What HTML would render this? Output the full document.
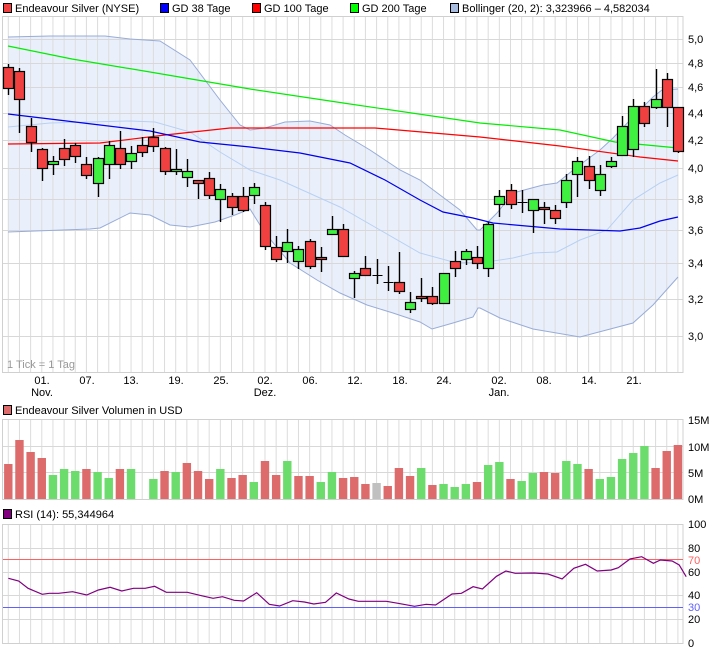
<!DOCTYPE html>
<html><head><meta charset="utf-8"><style>
html,body{margin:0;padding:0;background:#fff;width:726px;height:652px;overflow:hidden}
svg{display:block;font-family:"Liberation Sans",sans-serif;font-size:11px}
</style></head><body>
<svg id="s" width="726" height="652" xmlns="http://www.w3.org/2000/svg">
<g id="bg"></g>
<g id="fg"></g>
<!-- legend -->
<rect x="3.5" y="3.5" width="8" height="9" fill="#f04040" stroke="#000"/>
<text x="15" y="12">Endeavour Silver (NYSE)</text>
<rect x="160.5" y="3.5" width="8" height="9" fill="#0000ff" stroke="#000"/>
<text x="172" y="12">GD 38 Tage</text>
<rect x="252.5" y="3.5" width="8" height="9" fill="#ff0000" stroke="#000"/>
<text x="264" y="12">GD 100 Tage</text>
<rect x="350.5" y="3.5" width="8" height="9" fill="#00ff00" stroke="#000"/>
<text x="362" y="12">GD 200 Tage</text>
<rect x="450.5" y="3.5" width="8" height="9" fill="#a8bce0" stroke="#000"/>
<text x="462" y="12">Bollinger (20, 2): 3,323966 – 4,582034</text>
<g fill="#000">
<text x="688" y="43">5,0</text><text x="688" y="67">4,8</text><text x="688" y="91">4,6</text>
<text x="688" y="117">4,4</text><text x="688" y="144">4,2</text><text x="688" y="172">4,0</text>
<text x="688" y="203">3,8</text><text x="688" y="234">3,6</text><text x="688" y="267">3,4</text>
<text x="688" y="303">3,2</text><text x="688" y="340">3,0</text>
</g>
<text x="7" y="368" fill="#999">1 Tick = 1 Tag</text>
<g text-anchor="middle">
<text x="42" y="384">01.</text><text x="42" y="396">Nov.</text>
<text x="87" y="384">07.</text><text x="131" y="384">13.</text><text x="176" y="384">19.</text>
<text x="221" y="384">25.</text><text x="265" y="384">02.</text><text x="265" y="396">Dez.</text>
<text x="310" y="384">06.</text><text x="355" y="384">12.</text><text x="400" y="384">18.</text>
<text x="444" y="384">24.</text><text x="499" y="384">02.</text><text x="499" y="396">Jan.</text>
<text x="544" y="384">08.</text><text x="589" y="384">14.</text><text x="634" y="384">21.</text>
</g>
<rect x="3.5" y="405.5" width="8" height="9" fill="#dd6b6b" stroke="#000"/>
<text x="15" y="414">Endeavour Silver Volumen in USD</text>
<text x="688" y="424">15M</text><text x="688" y="451">10M</text><text x="688" y="477">5M</text><text x="688" y="503">0M</text>
<rect x="3.5" y="509.5" width="8" height="9" fill="#800080" stroke="#000"/>
<text x="15" y="518">RSI (14): 55,344964</text>
<text x="688" y="528">100</text><text x="688" y="552">80</text><text x="688" y="564" fill="#ff6060">70</text>
<text x="688" y="576">60</text><text x="688" y="599">40</text><text x="688" y="611" fill="#6060ff">30</text>
<text x="688" y="623">20</text><text x="688" y="647">0</text>
</svg>
<script>
var NS="http://www.w3.org/2000/svg",bg=document.getElementById('bg'),fg=document.getElementById('fg');
function el(p,t,a){var e=document.createElementNS(NS,t);for(var k in a)e.setAttribute(k,a[k]);p.appendChild(e);return e;}
function pts(a){return a.map(function(p){return p[0]+','+p[1]}).join(' ');}
var GX=[];for(var i=0;i<61;i++)GX.push(8.3+11.16*i);
// bollinger fill
var up=[[8,37],[50,36],[105,36],[130,39],[160,41],[190,60],[220,100],[240,125],[250,130],[265,128],[285,122],[310,121],[330,125],[345,135],[370,150],[400,170],[420,180],[440,195],[460,210],[477,230],[480,230],[497,213],[513,193],[543,185],[557,183],[577,167],[600,150],[613,138],[633,117],[653,97],[662,90],[678,89]];
var lo=[[8,232],[90,229],[100,228],[130,213],[150,215],[170,225],[190,227],[215,222],[235,215],[250,209],[265,233],[290,263],[317,280],[340,293],[367,305],[393,313],[420,322],[432,329],[453,323],[473,317],[478,308],[480,308],[500,318],[533,329],[580,337],[633,323],[653,305],[678,277]];
el(bg,'polygon',{points:pts(up.concat(lo.slice().reverse())),fill:'#e9f0fc'});
// grids
function vgrid(y1,y2){GX.forEach(function(x){el(bg,'line',{x1:x,x2:x,y1:y1,y2:y2,stroke:'#dcdcdc'})});}
function hgrid(ys){ys.forEach(function(y){el(bg,'line',{x1:3,x2:683,y1:y+.5,y2:y+.5,stroke:'#d8d8d8'})});}
vgrid(16,372);vgrid(419,499);vgrid(524,643);
hgrid([39,63,87,113,140,168,199,230,263,299,336]);hgrid([446,472]);hgrid([548,572,595,619]);
[[16,372],[419,499],[524,643]].forEach(function(r){el(bg,'rect',{x:2.5,y:r[0]+.5,width:680.5,height:r[1]-r[0],fill:'none',stroke:'#d0d0d0'})});
function line(a,c,w){el(fg,'polyline',{points:pts(a),fill:'none',stroke:c,'stroke-width':w||1.2});}
line(up,'#98acd8',1);line(lo,'#98acd8',1);
line([[8,127],[50,123],[130,121],[155,122],[190,132],[220,152],[250,170],[280,180],[340,207],[380,230],[420,253],[453,262],[480,263],[513,258],[533,253],[557,252],[580,240],[607,230],[633,200],[660,183],[678,175]],'#b8d0f4',1);
line([[8,46],[72,59],[150,72],[250,89],[350,104],[480,123],[560,130],[615,142],[678,148]],'#00ee00');
line([[8,144],[100,143],[165,135],[230,128],[375,128],[480,137],[560,146],[640,157],[678,161]],'#ff0000');
line([[8,114],[50,119],[100,125],[150,131],[200,142],[250,147],[300,153],[350,163],[385,180],[420,200],[443,212],[473,218],[493,223],[560,229],[620,231],[640,228],[660,221],[678,217]],'#0000ee');
// candles [bodyTop, bodyBot, wickTop, wickBot, color]
var C=[[67,88,64,95,'r'],[71,99,68,133,'r'],[126,142,118,152,'r'],[149,168,148,181,'r'],[161,164,156,175,'g'],[148,159,139,166,'r'],[145,156,143,163,'r'],[164,175,157,179,'r'],[158,183,157,197,'g'],[145,164,141,179,'g'],[148,164,131,169,'r'],[153,161,146,169,'g'],[145,152,137,157,'r'],[137,146,128,152,'r'],[148,171,147,175,'r'],[169,171,149,175,'g'],[171,177,159,187,'g'],[180,183,180,199,'r'],[178,195,172,199,'r'],[189,199,184,222,'g'],[196,207,193,215,'r'],[196,210,187,212,'r'],[187,195,183,204,'g'],[205,246,202,250,'r'],[247,259,236,262,'r'],[242,251,229,263,'g'],[249,261,246,269,'g'],[241,266,239,269,'r'],[257,259,247,272,'r'],[229,234,216,234,'g'],[229,256,224,256,'r'],[273,278,271,298,'g'],[268,275,256,275,'r'],[275,275,259,284,'d'],[282,282,266,291,'d'],[282,291,252,294,'r'],[302,309,292,313,'g'],[296,298,278,302,'r'],[296,303,287,305,'r'],[273,303,273,303,'g'],[261,268,251,277,'r'],[251,259,249,265,'g'],[257,263,246,269,'r'],[224,268,222,277,'g'],[196,204,190,217,'g'],[190,204,184,209,'r'],[202,202,190,213,'d'],[199,210,199,233,'g'],[207,209,202,224,'r'],[210,218,205,224,'r'],[180,202,174,208,'g'],[161,174,157,197,'g'],[166,180,156,189,'r'],[174,190,165,196,'g'],[161,166,157,168,'g'],[126,155,116,155,'g'],[106,149,99,157,'g'],[106,123,102,127,'r'],[99,107,69,109,'g'],[79,107,73,127,'r'],[107,151,107,153,'r']];
C.forEach(function(c,i){var x=Math.round(GX[i])+.5;
 el(fg,'line',{x1:x,x2:x,y1:c[2],y2:c[3],stroke:'#000','stroke-width':1.4});
 if(c[4]=='d'){el(fg,'line',{x1:x-5,x2:x+5,y1:c[0]+.5,y2:c[0]+.5,stroke:'#000'});return;}
 el(fg,'rect',{x:x-5,y:c[0]+.5,width:10,height:Math.max(c[1]-c[0],2),fill:c[4]=='r'?'#f04040':'#40f040',stroke:'#000','stroke-width':1.2});
});
// volume (3x image y; 0 = none)
var V=[[402,'r'],[330,'r'],[366,'r'],[384,'r'],[435,'g'],[417,'g'],[423,'g'],[417,'r'],[426,'g'],[444,'g'],[417,'r'],[417,'g'],[0,''],[447,'g'],[423,'r'],[426,'g'],[399,'r'],[423,'r'],[447,'r'],[417,'g'],[444,'r'],[435,'r'],[456,'g'],[393,'r'],[435,'r'],[393,'g'],[438,'r'],[438,'r'],[456,'g'],[426,'g'],[444,'r'],[441,'r'],[462,'r'],[459,'y'],[468,'r'],[414,'r'],[438,'r'],[414,'g'],[465,'r'],[462,'g'],[471,'g'],[462,'g'],[456,'r'],[405,'g'],[396,'g'],[447,'r'],[453,'g'],[429,'g'],[426,'r'],[429,'r'],[393,'g'],[402,'g'],[417,'r'],[447,'g'],[441,'g'],[387,'g'],[369,'g'],[348,'g'],[414,'r'],[363,'r'],[345,'r']];
var col={r:'#dd6b6b',g:'#6cdc6c',y:'#c0c0c0'};
V.forEach(function(v,i){if(!v[0])return;var y=330+v[0]/3;el(fg,'rect',{x:GX[i]-4.2,y:y,width:8.4,height:499-y,fill:col[v[1]]});});
// RSI
el(fg,'line',{x1:3,x2:683,y1:559.5,y2:559.5,stroke:'#ff6060'});
el(fg,'line',{x1:3,x2:683,y1:607.5,y2:607.5,stroke:'#6060ff'});
var R=[[18,220],[40,228],[60,250],[90,268],[105,265],[125,265],[155,260],[185,270],[210,255],[235,247],[260,258],[285,250],[310,250],[330,244],[355,262],[400,262],[430,272],[455,280],[475,275],[500,286],[520,288],[548,263],[575,298],[597,303],[625,287],[650,291],[670,297],[695,292],[718,264],[745,282],[765,289],[825,289],[850,295],[885,304],[910,298],[930,300],[965,267],[985,265],[1010,245],[1030,252],[1060,214],[1080,198],[1100,205],[1140,204],[1170,207],[1200,222],[1225,190],[1250,178],[1275,198],[1305,195],[1320,188],[1345,162],[1370,155],[1395,175],[1410,165],[1435,168],[1450,180],[1465,215]];
line(R.map(function(p){return [(p[0]/2.135).toFixed(1),(505+p[1]/3).toFixed(1)]}),'#800080',1.2);
</script>
</body></html>
